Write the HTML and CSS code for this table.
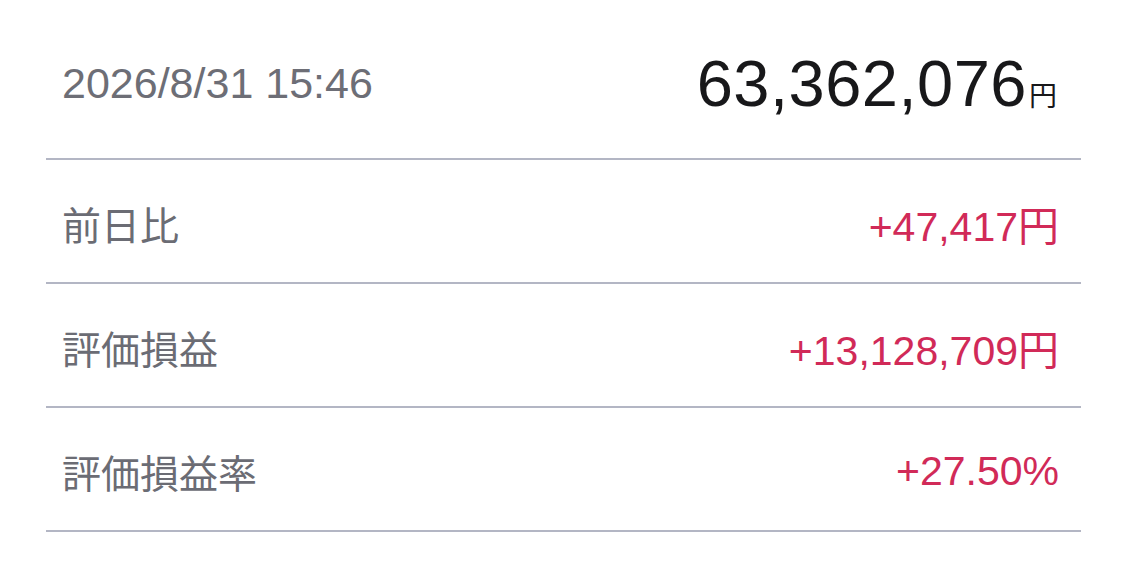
FILE: index.html
```html
<!DOCTYPE html>
<html lang="ja">
<head>
    <meta charset="UTF-8">
    <meta name="viewport" content="width=device-width, initial-scale=1.0">
    <title>資産サマリー</title>
    <link rel="stylesheet" href="styles.css">
</head>
<body>

    <div class="summary">
        <div class="summary-head">
            <span class="date">2026/8/31 15:46</span>
            <span class="total">63,362,076<span class="yen">円</span></span>
        </div>

        <div class="row">
            <span class="label">前日比</span>
            <span class="value">+47,417円</span>
        </div>

        <div class="row">
            <span class="label">評価損益</span>
            <span class="value">+13,128,709円</span>
        </div>

        <div class="row">
            <span class="label">評価損益率</span>
            <span class="value">+27.50%</span>
        </div>
    </div>

</body>
</html>
```

FILE: styles.css
```css
/* Reset */
* {
    margin: 0;
    padding: 0;
    box-sizing: border-box;
}

body {
    font-family: "Liberation Sans", "Noto Sans CJK JP", sans-serif;
    background-color: #fff;
    color: #1c1c1e;
    padding: 0 40px 0 46px;
}

.summary {
    width: 1035px;
}

.summary-head {
    display: flex;
    justify-content: space-between;
    align-items: center;
    height: 160px;
    padding: 8px 24px 0 16px;
    border-bottom: 2px solid #b3b6c4;
}

.date {
    font-size: 43px;
    color: #6d6e76;
}

.total {
    font-size: 65px;
    color: #18181a;
    letter-spacing: 0.5px;
}

.total .yen {
    font-family: "Noto Sans CJK JP", sans-serif;
    font-size: 28px;
    margin-left: 2px;
    letter-spacing: 0;
}

.row {
    display: flex;
    justify-content: space-between;
    align-items: center;
    height: 124px;
    padding: 4px 22px 0 16px;
    border-bottom: 2px solid #b3b6c4;
}

.label {
    font-family: "Noto Sans CJK JP", sans-serif;
    font-size: 39px;
    color: #6b6c74;
}

.value {
    font-size: 41px;
    color: #d12a58;
}
```
